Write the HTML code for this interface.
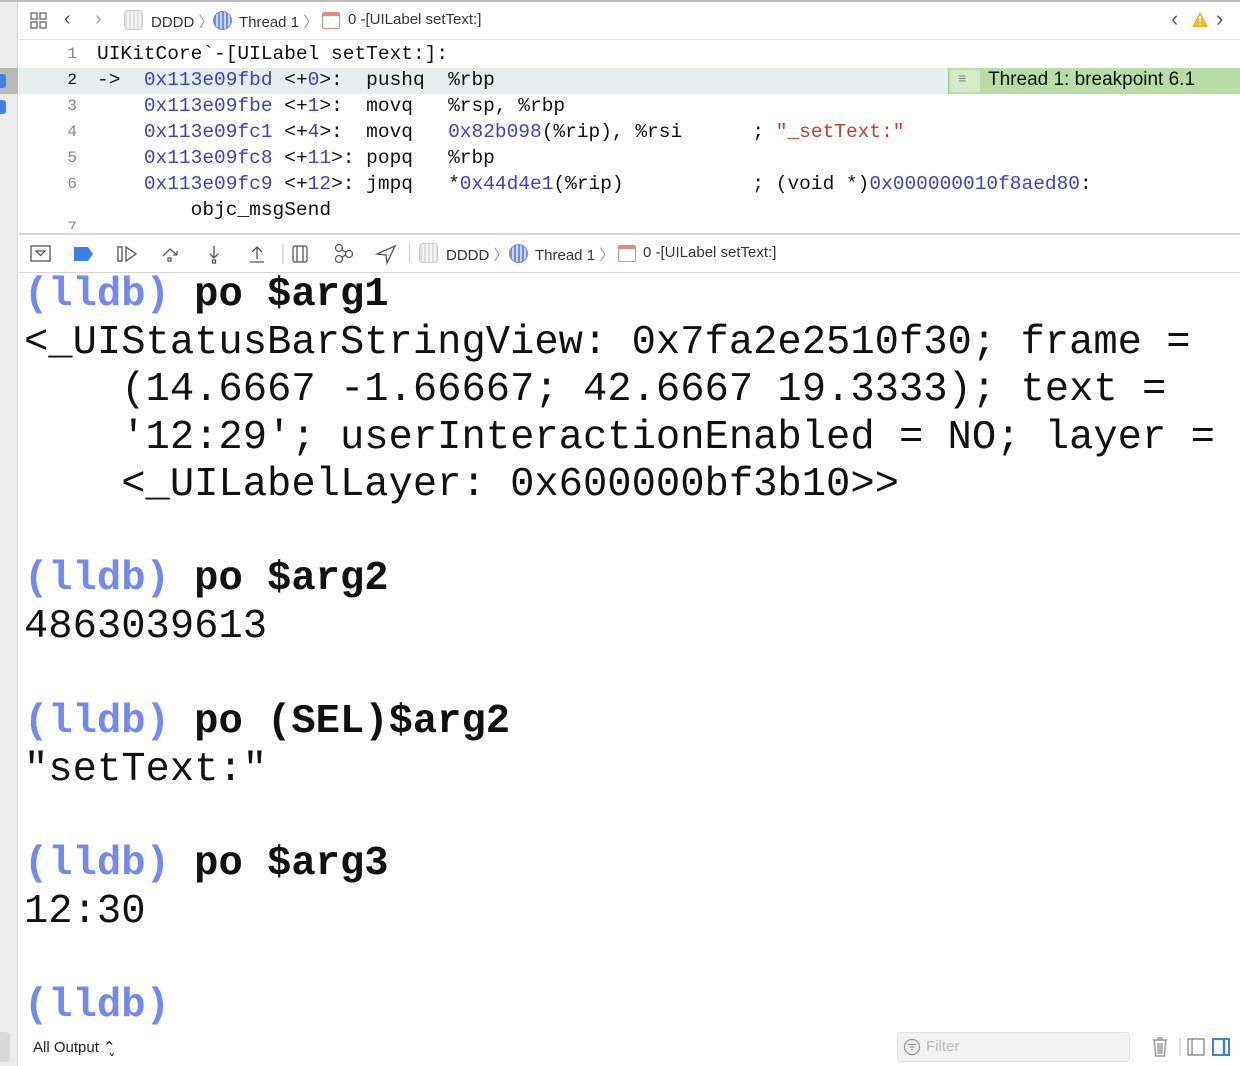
<!DOCTYPE html>
<html><head><meta charset="utf-8"><style>
*{margin:0;padding:0;box-sizing:border-box}
body{width:1240px;height:1066px;overflow:hidden;background:#fff;position:relative;font-family:"Liberation Sans",sans-serif}
.abs{position:absolute;white-space:pre}
.mono{font-family:"Liberation Mono",monospace}
.code{font-size:19.5px;line-height:26px;color:#111}
.ln{font-size:16px;color:#888;text-align:right;width:20px}
.b{color:#3c3fd0}
.r{color:#c4402c}
.con{font-size:40.5px;line-height:47.5px;color:#111}
.ll{color:#7388f0;font-weight:bold}
.cmd{font-weight:bold}
.sans{font-size:15px;color:#333}
svg{position:absolute}
</style></head><body>
<div class="abs" style="left:0;top:0;width:18px;height:1066px;background:#ececec;border-right:1px solid #d8d8d8"></div>
<div class="abs" style="left:0;top:0;width:1240px;height:2px;background:#bbb"></div>
<!-- top bar -->
<div class="abs" style="left:19px;top:39px;width:1221px;height:1px;background:#e2e2e2"></div>
<svg style="left:30px;top:12px" width="18" height="18" viewBox="0 0 18 18" fill="none" stroke="#666" stroke-width="1.3"><rect x="1" y="1" width="6" height="6"/><rect x="10" y="1" width="6" height="6"/><rect x="1" y="10" width="6" height="6"/><rect x="10" y="10" width="6" height="6"/></svg>
<div class="abs sans" style="left:64px;top:8px;font-size:20px;color:#555">&lsaquo;</div>
<div class="abs sans" style="left:95px;top:8px;font-size:20px;color:#aaa">&rsaquo;</div>
<div class="abs" style="left:124px;top:10px;width:19px;height:20px;border:1px solid #ccc;border-radius:4px;background:repeating-linear-gradient(90deg,#ddd 0 2px,#f4f4f4 2px 4px)"></div>
<div class="abs sans" style="left:151px;top:11px">DDDD <span style="color:#999">〉</span></div>
<div class="abs" style="left:213px;top:11px;width:19px;height:19px;border-radius:50%;background:repeating-linear-gradient(90deg,#6f8fd8 0 2px,#c9d6f2 2px 4px);border:1px solid #6f8fd8"></div>
<div class="abs sans" style="left:239px;top:11px">Thread 1 <span style="color:#999">〉</span></div>
<div class="abs" style="left:322px;top:12px;width:18px;height:17px;border:1.5px solid #e08a80;border-top-width:4px;border-radius:2px"></div>
<div class="abs sans" style="left:348px;top:11px">0 -[UILabel setText:]</div>
<div class="abs sans" style="left:1171px;top:6px;font-size:22px;color:#555">&lsaquo;</div>
<svg style="left:1191px;top:11px" width="18" height="17" viewBox="0 0 18 17"><path d="M9 1 L17 16 L1 16 Z" fill="#f2b526"/><rect x="8.2" y="5" width="1.6" height="6" fill="#fff"/><rect x="8.2" y="12.5" width="1.6" height="1.6" fill="#fff"/></svg>
<div class="abs sans" style="left:1216px;top:6px;font-size:22px;color:#555">&rsaquo;</div>
<!-- code -->
<div class="abs" style="left:19px;top:68px;width:1221px;height:26px;background:#e5edee"></div>
<div class="abs" style="left:0;top:68px;width:18px;height:26px;background:#b8b8b8"></div>
<div class="abs" style="left:0;top:74px;width:6px;height:14px;background:#3f80e8;border-radius:0 3px 3px 0"></div>
<div class="abs" style="left:0;top:100px;width:6px;height:14px;background:#3f80e8;border-radius:0 3px 3px 0"></div>
<div class="abs" style="left:948px;top:68px;width:292px;height:26px;background:#b7dca4;border-left:1px solid #9fcb8a"></div>
<div class="abs" style="left:950px;top:70px;width:30px;height:22px;background:#d3ebc8;border-radius:2px"></div>
<div class="abs sans" style="left:958px;top:70px;font-size:14px;color:#888">≡</div>
<div class="abs sans" style="left:988px;top:69px;font-size:19px;color:#111">Thread 1: breakpoint 6.1</div>

<div class="abs mono ln" style="left:57px;top:45px">1</div>
<div class="abs mono ln" style="left:57px;top:71px;color:#111">2</div>
<div class="abs mono ln" style="left:57px;top:97px">3</div>
<div class="abs mono ln" style="left:57px;top:123px">4</div>
<div class="abs mono ln" style="left:57px;top:149px">5</div>
<div class="abs mono ln" style="left:57px;top:175px">6</div>
<div class="abs mono ln" style="left:57px;top:219px;height:10px;overflow:hidden">7</div>
<div class="abs mono code" style="left:97px;top:41px">UIKitCore`-[UILabel setText:]:
-&gt;  <span class="b">0x113e09fbd</span> &lt;+<span class="b">0</span>&gt;:  pushq  %rbp
    <span class="b">0x113e09fbe</span> &lt;+<span class="b">1</span>&gt;:  movq   %rsp, %rbp
    <span class="b">0x113e09fc1</span> &lt;+<span class="b">4</span>&gt;:  movq   <span class="b">0x82b098</span>(%rip), %rsi      ; <span class="r">"_setText:"</span>
    <span class="b">0x113e09fc8</span> &lt;+<span class="b">11</span>&gt;: popq   %rbp
    <span class="b">0x113e09fc9</span> &lt;+<span class="b">12</span>&gt;: jmpq   *<span class="b">0x44d4e1</span>(%rip)           ; (void *)<span class="b">0x000000010f8aed80</span>:
        objc_msgSend</div>
<!-- debug bar -->
<div class="abs" style="left:19px;top:233px;width:1221px;height:2px;background:#d6d6d6"></div>
<div class="abs" style="left:19px;top:272px;width:1221px;height:1px;background:#d6d6d6"></div>
<svg style="left:30px;top:244px" width="200" height="20" viewBox="0 0 200 20" fill="none" stroke="#555" stroke-width="1.3">
<rect x="1" y="2" width="19" height="15"/><path d="M6 7 L10.5 11.5 L15 7 Z"/>
<path d="M44 3 H58 L63 10 L58 17 H44 Z" fill="#3f80e8" stroke="none"/>
<rect x="88" y="3" width="4" height="14"/><path d="M96 3 L106 10 L96 17 Z"/>
<path d="M133 12 L140 5 L147 11 M147 11 V7 M147 11 H143"/><rect x="138" y="14" width="3" height="3"/>
<path d="M184 2 V14 M180 10 L184 14 L188 10"/><rect x="182.5" y="16" width="3" height="3"/>
</svg>
<svg style="left:245px;top:243px" width="160" height="22" viewBox="0 0 160 22" fill="none" stroke="#555" stroke-width="1.3">
<path d="M12 16 V4 M7 9 L12 4 L17 9 M5 19 H19"/>
<line x1="38" y1="1" x2="38" y2="21" stroke="#ccc"/>
<rect x="48" y="3" width="14" height="16" rx="2"/><path d="M52 3 V19 M58 3 V19"/>
<circle cx="94" cy="5" r="3.5"/><circle cx="94" cy="16" r="3.5"/><circle cx="104" cy="11" r="3.5"/><path d="M97 7 L101 9 M97 14 L101 12"/>
<path d="M150 3 L132 11 L141 12 L142 20 Z"/>
</svg>
<div class="abs" style="left:409px;top:243px;width:1px;height:20px;background:#ccc"></div>
<div class="abs" style="left:419px;top:243px;width:19px;height:20px;border:1px solid #ccc;border-radius:4px;background:repeating-linear-gradient(90deg,#ddd 0 2px,#f4f4f4 2px 4px)"></div>
<div class="abs sans" style="left:446px;top:244px">DDDD <span style="color:#999">〉</span></div>
<div class="abs" style="left:509px;top:244px;width:19px;height:19px;border-radius:50%;background:repeating-linear-gradient(90deg,#6f8fd8 0 2px,#c9d6f2 2px 4px);border:1px solid #6f8fd8"></div>
<div class="abs sans" style="left:535px;top:244px">Thread 1 <span style="color:#999">〉</span></div>
<div class="abs" style="left:618px;top:245px;width:18px;height:17px;border:1.5px solid #e08a80;border-top-width:4px;border-radius:2px"></div>
<div class="abs sans" style="left:643px;top:244px">0 -[UILabel setText:]</div>
<!-- console -->
<div class="abs mono con" style="left:24px;top:272px"><span class="ll">(lldb)</span> <span class="cmd">po $arg1</span>
&lt;_UIStatusBarStringView: 0x7fa2e2510f30; frame =
    (14.6667 -1.66667; 42.6667 19.3333); text =
    '12:29'; userInteractionEnabled = NO; layer =
    &lt;_UILabelLayer: 0x600000bf3b10&gt;&gt;</div>
<div class="abs mono con" style="left:24px;top:556px"><span class="ll">(lldb)</span> <span class="cmd">po $arg2</span>
4863039613</div>
<div class="abs mono con" style="left:24px;top:699px"><span class="ll">(lldb)</span> <span class="cmd">po (SEL)$arg2</span>
"setText:"</div>
<div class="abs mono con" style="left:24px;top:841px"><span class="ll">(lldb)</span> <span class="cmd">po $arg3</span>
12:30</div>
<div class="abs mono con" style="left:24px;top:983px"><span class="ll">(lldb)</span></div>
<!-- bottom -->
<div class="abs" style="left:0;top:1032px;width:10px;height:30px;background:#d8d8d8;border-radius:0 4px 4px 0"></div>
<div class="abs sans" style="left:33px;top:1038px;font-size:15px;color:#222">All Output ⌃̬</div>
<div class="abs" style="left:897px;top:1032px;width:233px;height:30px;background:#f1f1f1;border:1px solid #e0e0e0;border-radius:4px"></div>
<svg style="left:903px;top:1038px" width="18" height="18" viewBox="0 0 18 18" fill="none" stroke="#999" stroke-width="1.2"><circle cx="9" cy="9" r="7.5"/><path d="M5 6.5 H13 M6.5 9 H11.5 M8 11.5 H10"/></svg>
<div class="abs sans" style="left:926px;top:1038px;color:#bbb">Filter</div>
<svg style="left:1150px;top:1036px" width="80" height="22" viewBox="0 0 80 22" fill="none" stroke="#888" stroke-width="1.2"><path d="M3 4 H17 M8 4 V2 H12 V4 M4.5 4 L5.5 20 H14.5 L15.5 4 M8 7 V18 M10 7 V18 M12 7 V18"/><line x1="30" y1="2" x2="30" y2="20" stroke="#ccc"/><rect x="38" y="3" width="16" height="16" stroke="#777"/><path d="M42 3 V19" stroke="#777"/><rect x="63" y="3" width="16" height="16" stroke="#3f80e8" stroke-width="2"/><path d="M74 3 V19" stroke="#3f80e8" stroke-width="2.5"/></svg>
</body></html>
